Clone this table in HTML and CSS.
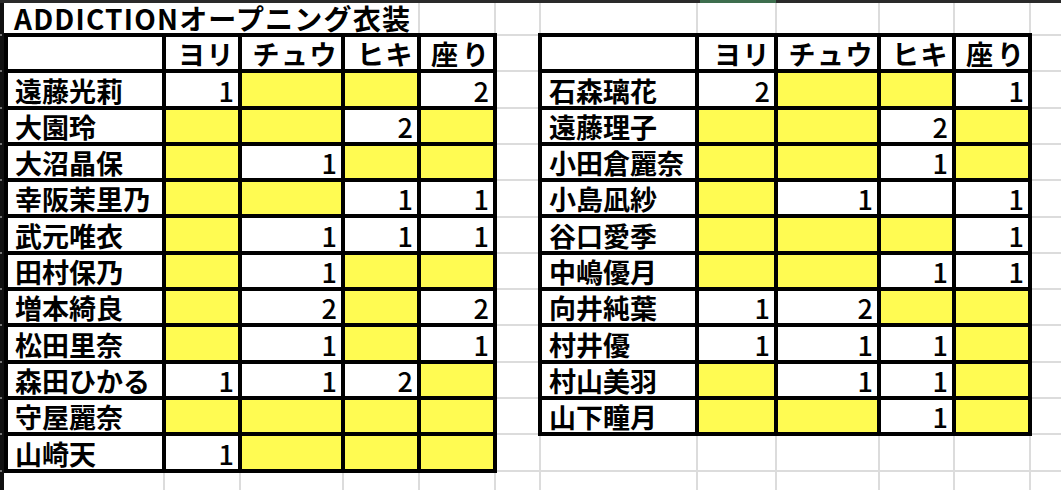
FILE: index.html
```html
<!DOCTYPE html>
<html lang="ja">
<head>
<meta charset="utf-8">
<title>ADDICTIONオープニング衣装</title>
<link rel="stylesheet" href="styles.css">
</head>
<body>
<div class="sheet">
  <div class="topbar"><span class="sel"></span></div>
  <div class="main">
    <div class="rowbar"></div>
    <div class="content">
      <div class="title">ADDICTIONオープニング衣装</div>
      <div class="tables">
        <div class="tbl tbl-left">
          <div class="c"></div><div class="c h">ヨリ</div><div class="c h">チュウ</div><div class="c h">ヒキ</div><div class="c h w">座り</div>
          <div class="c n">遠藤光莉</div><div class="c">1</div><div class="c y"></div><div class="c y"></div><div class="c">2</div>
          <div class="c n">大園玲</div><div class="c y"></div><div class="c y"></div><div class="c">2</div><div class="c y"></div>
          <div class="c n">大沼晶保</div><div class="c y"></div><div class="c">1</div><div class="c y"></div><div class="c y"></div>
          <div class="c n">幸阪茉里乃</div><div class="c y"></div><div class="c y"></div><div class="c">1</div><div class="c">1</div>
          <div class="c n">武元唯衣</div><div class="c y"></div><div class="c">1</div><div class="c">1</div><div class="c">1</div>
          <div class="c n">田村保乃</div><div class="c y"></div><div class="c">1</div><div class="c y"></div><div class="c y"></div>
          <div class="c n">増本綺良</div><div class="c y"></div><div class="c">2</div><div class="c y"></div><div class="c">2</div>
          <div class="c n">松田里奈</div><div class="c y"></div><div class="c">1</div><div class="c y"></div><div class="c">1</div>
          <div class="c n">森田ひかる</div><div class="c">1</div><div class="c">1</div><div class="c">2</div><div class="c y"></div>
          <div class="c n">守屋麗奈</div><div class="c y"></div><div class="c y"></div><div class="c y"></div><div class="c y"></div>
          <div class="c n">山崎天</div><div class="c">1</div><div class="c y"></div><div class="c y"></div><div class="c y"></div>
        </div>
        <div class="tbl tbl-right">
          <div class="c"></div><div class="c h">ヨリ</div><div class="c h">チュウ</div><div class="c h">ヒキ</div><div class="c h w">座り</div>
          <div class="c n">石森璃花</div><div class="c">2</div><div class="c y"></div><div class="c y"></div><div class="c">1</div>
          <div class="c n">遠藤理子</div><div class="c y"></div><div class="c y"></div><div class="c">2</div><div class="c y"></div>
          <div class="c n">小田倉麗奈</div><div class="c y"></div><div class="c y"></div><div class="c">1</div><div class="c y"></div>
          <div class="c n">小島凪紗</div><div class="c y"></div><div class="c">1</div><div class="c"></div><div class="c">1</div>
          <div class="c n">谷口愛季</div><div class="c y"></div><div class="c y"></div><div class="c y"></div><div class="c">1</div>
          <div class="c n">中嶋優月</div><div class="c y"></div><div class="c y"></div><div class="c">1</div><div class="c">1</div>
          <div class="c n">向井純葉</div><div class="c">1</div><div class="c">2</div><div class="c y"></div><div class="c y"></div>
          <div class="c n">村井優</div><div class="c">1</div><div class="c">1</div><div class="c">1</div><div class="c y"></div>
          <div class="c n">村山美羽</div><div class="c y"></div><div class="c">1</div><div class="c">1</div><div class="c y"></div>
          <div class="c n">山下瞳月</div><div class="c y"></div><div class="c y"></div><div class="c">1</div><div class="c y"></div>
        </div>
      </div>
    </div>
  </div>
</div>
</body>
</html>
```
FILE: styles.css
```css
html, body {
  margin: 0;
  padding: 0;
  background: #fff;
}

.sheet {
  width: 1061px;
  height: 490px;
  display: flex;
  flex-direction: column;
  font-family: "Noto Sans CJK JP", "Noto Sans", sans-serif;
  color: #000;
}

.topbar {
  height: 3px;
  flex: none;
  background: #2a2a2a;
  display: flex;
}

.sel {
  margin-left: 700px;
  width: 76px;
  background: #3e6e4e;
}

.main {
  flex: 1;
  display: flex;
}

.rowbar {
  width: 4px;
  flex: none;
  background:
    repeating-linear-gradient(to bottom, #111 0, #111 34.3px, #777 34.3px, #777 36.3px) 0 -3.3px / 2px 100% no-repeat,
    #111;
}

.content {
  flex: 1;
  display: flex;
  flex-direction: column;
  background-image:
    linear-gradient(to right,
      transparent 159px, #dcdcdc 159px, #dcdcdc 161px,
      transparent 161px, transparent 235px, #dcdcdc 235px, #dcdcdc 237px,
      transparent 237px, transparent 338px, #dcdcdc 338px, #dcdcdc 340px,
      transparent 340px, transparent 414px, #dcdcdc 414px, #dcdcdc 416px,
      transparent 416px, transparent 490px, #dcdcdc 490px, #dcdcdc 492px,
      transparent 492px, transparent 535px, #dcdcdc 535px, #dcdcdc 537px,
      transparent 537px, transparent 692px, #dcdcdc 692px, #dcdcdc 694px,
      transparent 694px, transparent 771px, #dcdcdc 771px, #dcdcdc 773px,
      transparent 773px, transparent 874px, #dcdcdc 874px, #dcdcdc 876px,
      transparent 876px, transparent 949px, #dcdcdc 949px, #dcdcdc 951px,
      transparent 951px, transparent 1025px, #dcdcdc 1025px, #dcdcdc 1027px,
      transparent 1027px),
    repeating-linear-gradient(to bottom,
      transparent 0, transparent 34.3px, #dcdcdc 34.3px, #dcdcdc 36.3px);
  background-position: 0 0, 0 -3.3px;
  background-repeat: no-repeat;
  background-size: 100% 100%, 100% 120%;
}

.title {
  width: 404px;
  height: 30px;
  flex: none;
  padding-left: 10px;
  background: #fff;
  display: flex;
  align-items: center;
  font-size: 28px;
  font-weight: 700;
  line-height: 1;
  white-space: nowrap;
  letter-spacing: 1.2px;
}

.tables {
  display: flex;
  align-items: flex-start;
  gap: 41px;
}

.tbl {
  display: grid;
  background: #000;
  padding: 4px;
  gap: 4px;
  grid-auto-rows: 32.3px;
}

.tbl-left {
  grid-template-columns: 154px 72px 99px 72px 72px;
}

.tbl-right {
  grid-template-columns: 153px 75px 99px 71px 72px;
}

.c {
  background: #fff;
  display: flex;
  align-items: flex-end;
  justify-content: flex-end;
  padding: 0 4px 2px 4px;
  font-size: 27px;
  font-weight: 500;
  line-height: 1;
  white-space: nowrap;
}

.c.y {
  background: #fffb52;
}

.c.n {
  justify-content: flex-start;
  padding-left: 7px;
  font-weight: 700;
}

.c.h {
  font-weight: 700;
  letter-spacing: 1.5px;
  padding-right: 3px;
}

.c.h.w {
  letter-spacing: 4px;
  padding-right: 0;
}
```
